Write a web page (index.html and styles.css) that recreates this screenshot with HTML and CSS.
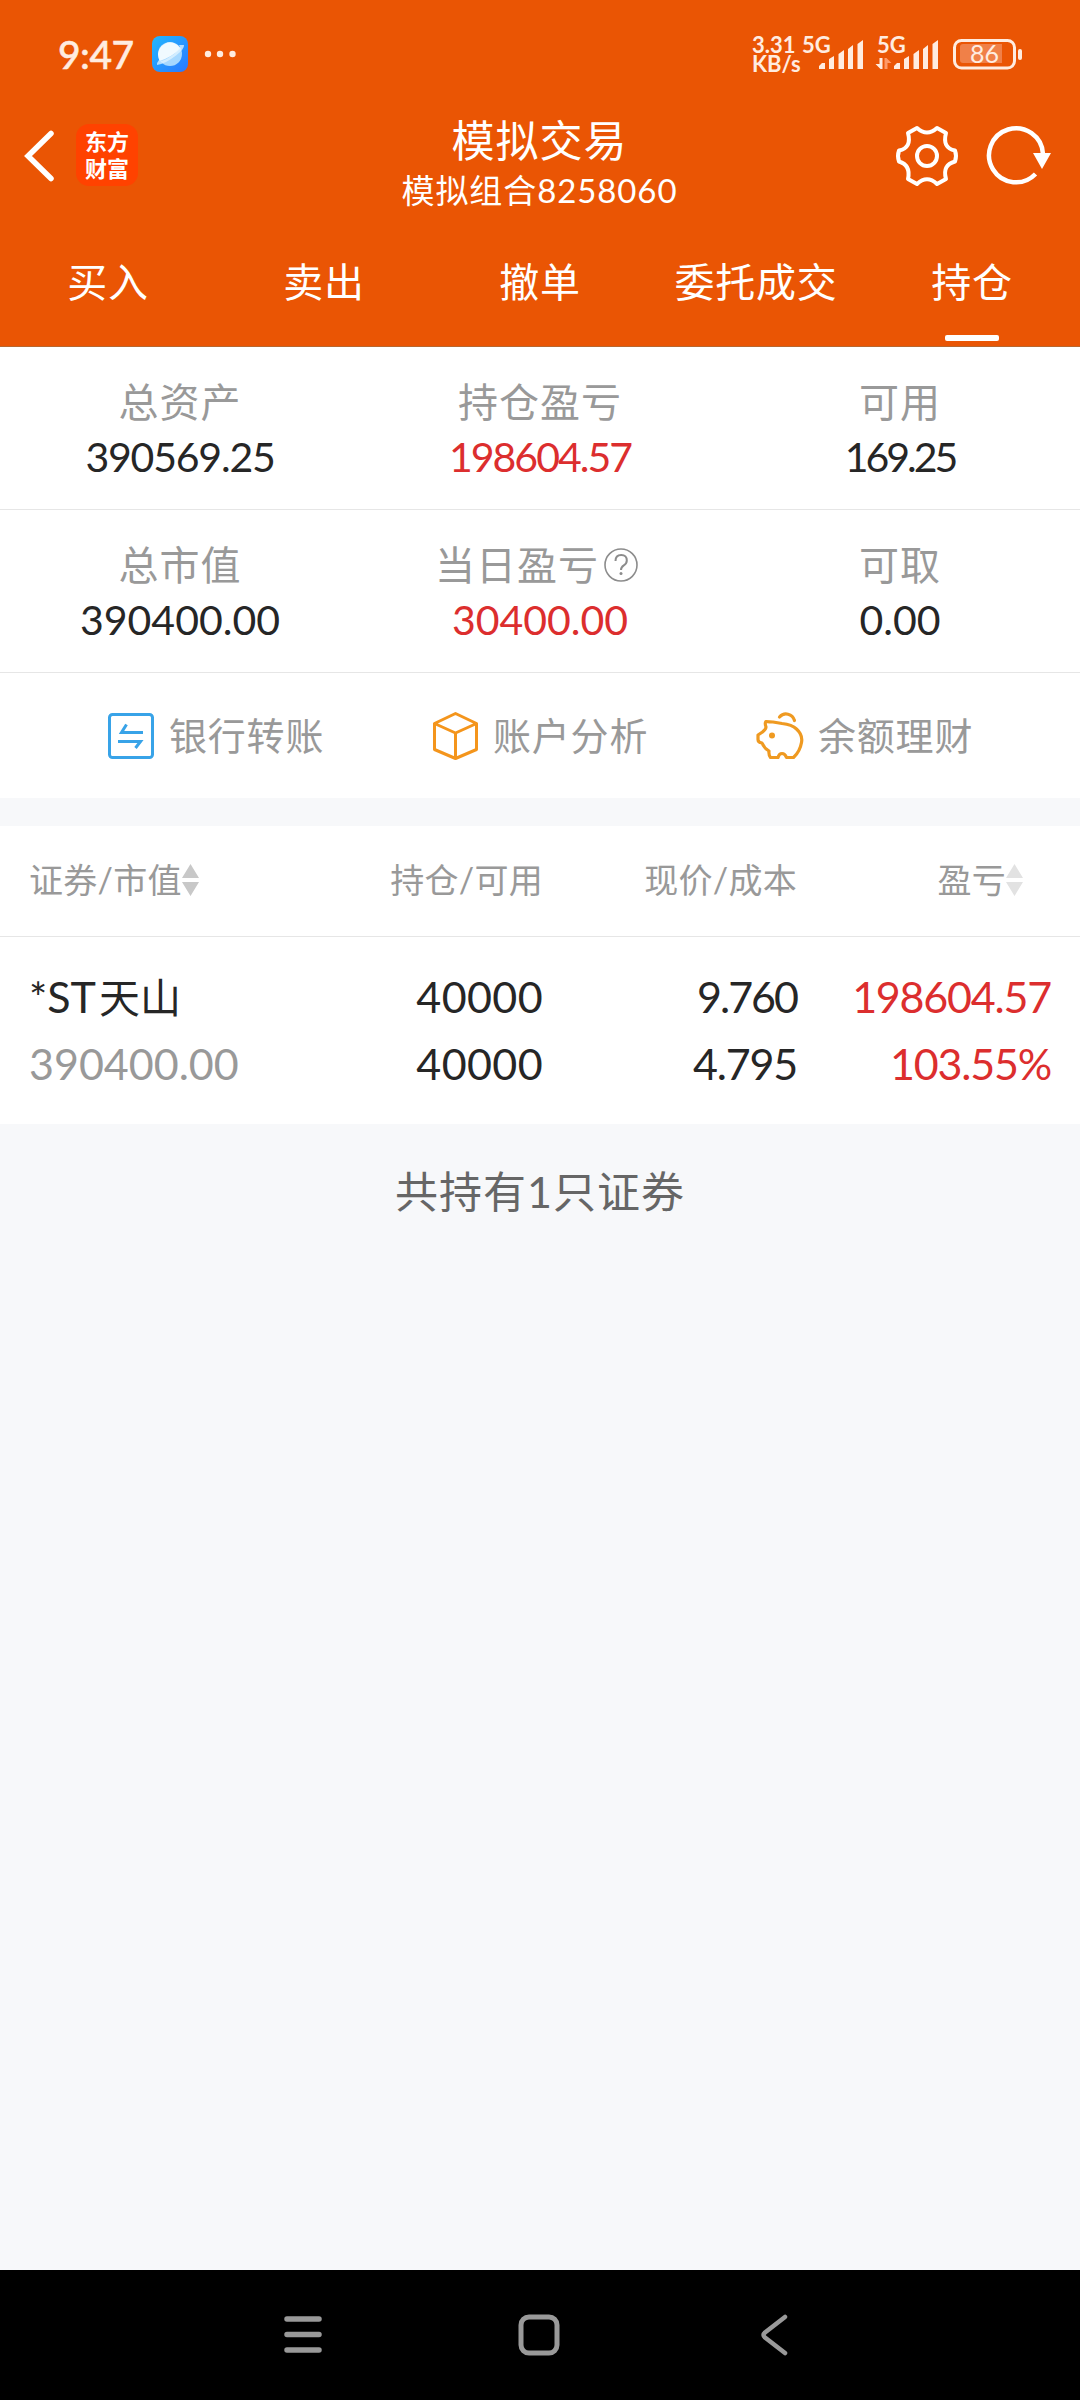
FILE: index.html
```
<!DOCTYPE html>
<html lang="zh-CN">
<head>
<meta charset="utf-8">
<title>模拟交易</title>
<link rel="stylesheet" href="styles.css">
</head>
<body>

<div class="header">
  <div class="status">
    <span class="time">9:47</span>
    <svg class="planet" width="36" height="36" viewBox="0 0 36 36">
      <defs>
        <linearGradient id="sky" x1="0" y1="0" x2="1" y2="1"><stop offset="0" stop-color="#22b8ff"/><stop offset="1" stop-color="#2a78ff"/></linearGradient>
      </defs>
      <rect width="36" height="36" rx="8" fill="url(#sky)"/>
      <circle cx="18" cy="18" r="12" fill="#a5d8ff"/>
      <path d="M6.6 22A12 12 0 0 1 28.5 12.5Q20 21 7.500 25Z" fill="#f0faff"/>
      <path d="M27 9h5q.5 4-8 10.500Q13 28 5 29q-.5-2 2-5 1 2 7-.8Q24 18 28 11Z" fill="#e2f4ff" opacity=".75"/>
    </svg>
    <svg class="more" width="32" height="8" viewBox="0 0 32 8"><g fill="#ffece0"><circle cx="4" cy="4" r="3.200"/><circle cx="16" cy="4" r="3.200"/><circle cx="28.500" cy="4" r="3.200"/></g></svg>
    <div class="speed"><span>3.31</span><span>KB/s</span></div>
    <div class="signal">
      <span>5G</span>
      <svg width="62" height="30" viewBox="0 0 62 30"><path fill="#ffece0" d="M17 29v-3l3-3h3v6zM27 29V19l5-3v13zM36.500 29V14l5.500-4v19zM46 29V9l5-4v24zM55.500 29V4l5.500-4v29z"/></svg>
    </div>
    <div class="signal second">
      <span>5G</span>
      <svg width="62" height="30" viewBox="0 0 62 30"><path fill="#ffece0" d="M17 29v-3l3-3h3v6zM27 29V19l5-3v13zM36.500 29V14l5.500-4v19zM46 29V9l5-4v24zM55.500 29V4l5.500-4v29z"/><path fill="#ffece0" d="M2.500 18h3v11h-2l-5-5h4z"/><path fill="#ff9a66" d="M7.500 29V18h2l5 5h-4v6z"/></svg>
    </div>
    <svg class="battery" width="70" height="31" viewBox="0 0 70 31">
      <rect x="1.500" y="1.500" width="60" height="27.500" rx="7" fill="none" stroke="#ffece0" stroke-width="3"/>
      <path d="M10 5h39v19H10a3 3 0 0 1-3-3V8a3 3 0 0 1 3-3z" fill="#f08048"/>
      <rect x="65" y="10" width="4" height="11" rx="2" fill="#ffece0"/>
      <text x="31.500" y="24" text-anchor="middle" class="percent">86</text>
    </svg>
  </div>

  <div class="titlebar">
    <div class="side">
      <svg width="30" height="50" viewBox="0 0 30 50"><path d="M27 2.500L4 25l23 22.500" fill="none" stroke="#fff" stroke-width="5.500" stroke-linecap="round" stroke-linejoin="miter"/></svg>
      <div class="logo"><span>东方</span><span>财富</span></div>
    </div>
    <div class="title">
      <h1>模拟交易</h1>
      <p>模拟组合<span>8258060</span></p>
    </div>
    <div class="side right">
      <svg class="gear" width="62" height="60" viewBox="0 0 62 60">
        <path d="M21 2L12 7Q16 22 3 24.500Q1 30 3 35.500Q15 39 12 53L21 58Q31 48.500 41 58L50 53Q46 39 59 35.500Q61 30 59 24.500Q46 22 50 7L41 2Q31 11 21 2Z" fill="none" stroke="#fff" stroke-width="4" stroke-linejoin="round"/>
        <circle cx="31" cy="30" r="10" fill="none" stroke="#fff" stroke-width="4"/>
      </svg>
      <svg class="refresh" width="66" height="60" viewBox="0 0 66 60">
        <path d="M49.500 48A27 27 0 1 1 57 28" fill="none" stroke="#fff" stroke-width="4.500"/>
        <path d="M47 27h18l-9 16z" fill="#fff"/>
      </svg>
    </div>
  </div>

  <div class="tabs">
    <a>买入</a>
    <a>卖出</a>
    <a>撤单</a>
    <a>委托成交</a>
    <a class="active">持仓</a>
  </div>
</div>

<div class="summary">
  <div class="cell"><label>总资产</label><b class="tight">390569.25</b></div>
  <div class="cell"><label>持仓盈亏</label><b class="red tighter">198604.57</b></div>
  <div class="cell"><label>可用</label><b class="tightest">169.25</b></div>
</div>
<div class="summary">
  <div class="cell"><label>总市值</label><b>390400.00</b></div>
  <div class="cell">
    <label class="help">当日盈亏<svg width="36" height="36" viewBox="0 0 36 36"><g fill="none" stroke="#8c8c8c" stroke-width="1.600"><circle cx="18" cy="18" r="16"/><path d="M12.500 14q0-6 5.700-6t5.600 5.500q0 3-3 4.800-2.800 1.700-2.800 4.700" stroke-width="2"/></g><circle cx="18" cy="26.500" r="1.500" fill="#8c8c8c"/></svg></label>
    <b class="red">30400.00</b>
  </div>
  <div class="cell"><label>可取</label><b>0.00</b></div>
</div>

<div class="actions">
  <a>
    <svg width="46" height="48" viewBox="0 0 46 48"><rect x="1.500" y="2.500" width="43" height="43" rx="3" fill="none" stroke="#38a3e8" stroke-width="3"/><path d="M35 20.500H13.500l5-8M10 29.500h22.500l-5 6.500" fill="none" stroke="#38a3e8" stroke-width="3"/></svg>
    <span>银行转账</span>
  </a>
  <a>
    <svg width="46" height="48" viewBox="0 0 46 48"><path d="M23.500 1.500L44.500 11.500v26L23.500 46.500 2.500 37.500v-26zM2.500 11.500l21 9.500 21-9.500M23.500 21v25.500" fill="none" stroke="#f4951c" stroke-width="3" stroke-linejoin="round"/></svg>
    <span>账户分析</span>
  </a>
  <a>
    <svg width="48" height="48" viewBox="0 0 48 48"><g fill="none" stroke="#ef9a21" stroke-width="3.200" stroke-linecap="round" stroke-linejoin="round"><path d="M10 9.500q3.500.5 7 .5l9 1.500q10 1 14.500 5.500 6.500 6 5 13.500-1.500 9-8 15h-7q-1.500-4-4.500-4t-4 4h-7.500Q12.500 43 13 39q-5-3-7-8-4-.5-4-3.500V23l4.500-3q3.500-3 3.500-5-1.500-4 0-5.500z"/><path d="M23.500 5Q27 1 32 2.200T38.500 8.500"/></g><circle cx="16" cy="23.500" r="3" fill="#ef9a21"/></svg>
    <span>余额理财</span>
  </a>
</div>

<div class="table">
  <div class="row head">
    <div>证券/市值<svg width="17" height="32" viewBox="0 0 17 32"><path d="M8.500 0L17 14H0zM8.500 32L17 18H0z" fill="#c8c8c8"/></svg></div>
    <div>持仓/可用</div>
    <div>现价/成本</div>
    <div class="profit">盈亏<svg width="17" height="32" viewBox="0 0 17 32"><path d="M8.500 0L17 14H0zM8.500 32L17 18H0z" fill="#e2e2e2"/></svg></div>
  </div>
  <div class="row stock">
    <div><span class="name">*ST<i>天山</i></span><span class="gray">390400.00</span></div>
    <div class="amount"><span>40000</span><span>40000</span></div>
    <div><span class="tighter">9.760</span><span class="tight">4.795</span></div>
    <div class="red"><span class="tight">198604.57</span><span class="tight">103.55%</span></div>
  </div>
</div>

<p class="total">共持有<span>1</span>只证券</p>

<div class="navbar">
  <svg width="40" height="42" viewBox="0 0 40 42"><path d="M4 5h32M4 20.500h32M4 36h32" stroke="#999" stroke-width="5.500" stroke-linecap="round"/></svg>
  <svg width="42" height="42" viewBox="0 0 42 42"><rect x="3" y="3" width="36" height="36" rx="8" fill="none" stroke="#999" stroke-width="5"/></svg>
  <svg width="42" height="42" viewBox="0 0 42 42"><path d="M30 3L10 18.500q-3 2.500 0 5L30 39" fill="none" stroke="#999" stroke-width="4.500" stroke-linecap="round"/></svg>
</div>

</body>
</html>
```
FILE: styles.css
```
* {
	box-sizing: border-box;
}
body {
	margin: 0;
	min-height: 2400px;
	display: flex;
	flex-direction: column;
	background: #f7f8fa;
	color: #262626;
	font-family: Lato, "Noto Sans CJK SC", sans-serif;
	font-size: 40px;
}
svg {
	display: block;
	flex: none;
	overflow: visible;
}
h1, p {
	margin: 0;
	font-weight: normal;
}
.red {
	color: #dc2e2e;
}

/* header */
.header {
	height: 347px;
	background: #ea5504;
	border-bottom: 1px solid #b8672f;
	color: #fff;
}
.status {
	display: flex;
	align-items: flex-start;
	height: 108px;
	padding: 36px 57px 0 58px;
	color: #ffece0;
}
.time {
	width: 94px;
	margin-top: -1px;
	font: 500 39px/39px Lato;
	letter-spacing: -.5px;
	-webkit-text-stroke: .5px #ffece0;
}
.more {
	margin: 14px 0 0 16px;
}
.speed {
	display: flex;
	flex-direction: column;
	width: 50px;
	margin-left: auto;
	margin-top: -1px;
	font: bold 22px/19px Lato;
	white-space: nowrap;
}
.signal {
	position: relative;
	width: 62px;
	height: 34px;
	padding-top: 4px;
}
.signal.second {
	margin-left: 13px;
}
.signal span {
	position: absolute;
	left: 0;
	top: -1px;
	font: bold 22px/19px Lato;
}
.battery {
	margin: 3px 0 0 14px;
}
.percent {
	font: 25px Lato;
	fill: #ffece0;
}

.titlebar {
	display: flex;
	height: 130px;
	padding: 7px 28px 0 24px;
}
.side {
	display: flex;
	width: 300px;
	padding-top: 16px;
}
.logo {
	display: flex;
	flex-direction: column;
	align-items: center;
	justify-content: center;
	width: 62px;
	height: 62px;
	margin: -7px 0 0 22px;
	padding-bottom: 3px;
	border-radius: 13px;
	background: #ff4200;
	font: bold 22px/27px "Noto Sans CJK SC", sans-serif;
}
.right {
	justify-content: flex-end;
	padding-top: 11px;
}
.refresh {
	margin-left: 28px;
}
.title {
	flex: 1;
	padding-left: 3px;
	text-align: center;
}
.title h1 {
	height: 52px;
	font-size: 43px;
	line-height: 51px;
	letter-spacing: 1px;
}
.title p {
	font-size: 33px;
	line-height: 46px;
	letter-spacing: .9px;
}

.tabs {
	display: flex;
	height: 103px;
}
.tabs a {
	position: relative;
	flex: 1;
	height: 90px;
	line-height: 88px;
	text-align: center;
	letter-spacing: .8px;
}
.tabs .active::after {
	content: "";
	position: absolute;
	left: 81px;
	top: 97px;
	width: 54px;
	height: 6px;
	border-radius: 2px;
	background: #fff;
}

/* assets */
.summary {
	display: flex;
	height: 163px;
	padding-top: 26px;
	background: #fff;
	border-bottom: 1px solid #e6e6e6;
}
.cell {
	flex: 1;
	display: flex;
	flex-direction: column;
	align-items: center;
}
.cell label {
	display: flex;
	align-items: center;
	height: 54px;
	color: #999;
	letter-spacing: 1px;
}
.cell b {
	margin-top: 2px;
	font-weight: normal;
	font-size: 41px;
	line-height: 56px;
}
.cell label svg {
	margin: 4px 0 0 4px;
}
.help {
	margin-right: 6px;
}
.tight {
	letter-spacing: -1.2px;
}
.tighter {
	letter-spacing: -2px;
}
.tightest {
	letter-spacing: -3px;
}

.actions {
	display: flex;
	height: 125px;
	padding: 0 0 0 108px;
	background: #fff;
	color: #999;
	font-size: 38px;
}
.actions a {
	display: flex;
	align-items: center;
	gap: 15px;
	width: 324px;
	letter-spacing: .8px;
}
.actions span {
	padding-bottom: 4px;
}
.actions a:last-child {
	gap: 14px;
}

/* holdings */
.table {
	margin-top: 28px;
	background: #fff;
}
.row {
	display: grid;
	grid-template-columns: 243px 271px 254px 254px;
	padding: 0 29px;
}
.row > div {
	text-align: right;
}
.row > div:first-child {
	text-align: left;
}
.head {
	height: 111px;
	border-bottom: 1px solid #e6e6e6;
	color: #999;
	font-size: 34px;
	line-height: 108px;
	letter-spacing: .3px;
}
.head svg {
	display: inline-block;
	vertical-align: -3px;
}
.head .profit {
	padding-right: 28px;
}
.stock {
	height: 187px;
	padding-top: 26px;
	font-size: 43px;
	line-height: 67px;
}
.stock span {
	display: block;
	height: 67px;
}
.name i {
	margin-left: 3px;
	font-style: normal;
	font-size: 41px;
}
.amount {
	letter-spacing: .4px;
}
.gray {
	color: #999;
}
.total {
	margin-top: 33px;
	text-align: center;
	font-size: 43px;
	line-height: 70px;
	letter-spacing: 1px;
	color: #666;
}

.navbar {
	display: flex;
	justify-content: space-between;
	height: 130px;
	margin-top: auto;
	padding: 44px 283px 0;
	background: #000;
}
```
